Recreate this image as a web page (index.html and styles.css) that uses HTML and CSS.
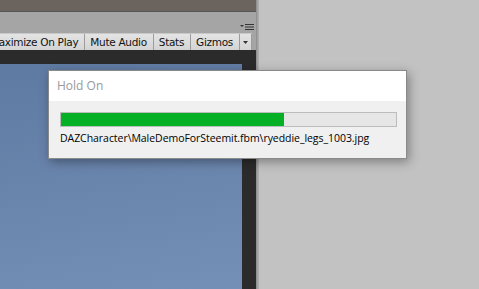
FILE: index.html
```html
<!DOCTYPE html>
<html lang="en">
<head>
    <meta charset="UTF-8">
    <meta name="viewport" content="width=device-width, initial-scale=1.0">
    <title>Hold On</title>
    <link rel="stylesheet" href="styles.css">
</head>
<body>
    <div class="editor">
        <div class="left-pane">
            <div class="scene-strip"></div>
            <div class="tab-bar">
                <svg class="tab-menu" width="14" height="6" viewBox="0 0 14 6">
                    <path d="M0 1h4l-2 2z" fill="#333"/>
                    <rect x="5" y="0" width="9" height="1" fill="#333"/>
                    <rect x="5" y="2.5" width="9" height="1" fill="#333"/>
                    <rect x="5" y="5" width="9" height="1" fill="#333"/>
                </svg>
            </div>
            <div class="toolbar">
                <span class="tool-btn">Maximize On Play</span>
                <span class="tool-btn">Mute Audio</span>
                <span class="tool-btn">Stats</span>
                <span class="tool-btn">Gizmos</span>
                <span class="tool-btn drop">
                    <svg width="5" height="3" viewBox="0 0 5 3"><path d="M0 0h5l-2.5 3z" fill="#333"/></svg>
                </span>
            </div>
            <div class="game-frame">
                <div class="game-view"></div>
            </div>
        </div>
        <div class="divider"></div>
        <div class="right-pane"></div>
    </div>

    <div class="dialog">
        <div class="dialog-title">Hold On</div>
        <div class="dialog-body">
            <div class="progress">
                <div class="progress-fill" style="width: 66.5%;"></div>
            </div>
            <div class="progress-text">DAZCharacter\MaleDemoForSteemit.fbm\ryeddie_legs_1003.jpg</div>
        </div>
    </div>
</body>
</html>
```

FILE: styles.css
```css
body {
    margin: 0;
    padding: 0;
    overflow: hidden;
    font-family: "DejaVu Sans", sans-serif;
}
.editor {
    display: flex;
    height: 289px;
    width: 479px;
}
.left-pane {
    width: 256px;
    display: flex;
    flex-direction: column;
    background-color: #a5a5a5;
}
.scene-strip {
    height: 11px;
    background-color: #6b635d;
    border-bottom: 1px solid #555;
}
.tab-bar {
    height: 21px;
    display: flex;
    justify-content: flex-end;
    align-items: flex-end;
    padding-right: 2px;
}
.tab-menu {
    margin-bottom: 3px;
}
.toolbar {
    height: 16px;
    display: flex;
    justify-content: flex-end;
    margin-right: 4px;
    background: linear-gradient(#e4e4e4, #d4d4d4);
    border-top: 1px solid #c8c8c8;
    overflow: hidden;
}
.tool-btn {
    flex-shrink: 0;
    font-size: 10.5px;
    letter-spacing: -0.3px;
    line-height: 16px;
    color: #111;
    padding: 0 6px 0 5px;
    border-right: 1px solid #9c9c9c;
    white-space: nowrap;
}
.tool-btn.drop {
    padding: 0 3px;
    display: flex;
    align-items: center;
}
.game-frame {
    flex: 1;
    background-color: #2b2b2b;
    padding: 14px 14px 0 0;
}
.game-view {
    height: 100%;
    background: linear-gradient(170deg, #5f7aa2, #7590b7);
}
.divider {
    width: 3px;
    background: linear-gradient(90deg, #8c8c8c, #b4b4b4);
}
.right-pane {
    flex: 1;
    background-color: #c2c2c2;
}
.dialog {
    position: absolute;
    left: 48px;
    top: 70px;
    width: 357px;
    border: 1px solid #8a8a8a;
    box-shadow: 2px 3px 10px rgba(0, 0, 0, 0.35);
    font-family: "Open Sans", sans-serif;
}
.dialog-title {
    height: 30px;
    background-color: #fff;
    color: #999;
    font-size: 12px;
    line-height: 30px;
    padding-left: 8px;
}
.dialog-body {
    background-color: #f0f0f0;
    padding: 11px 9px 12px 11px;
}
.progress {
    height: 13px;
    background-color: #e6e6e6;
    border: 1px solid #bcbcbc;
}
.progress-fill {
    height: 100%;
    background-color: #06b025;
}
.progress-text {
    font-size: 10.5px;
    letter-spacing: -0.05px;
    color: #000;
    margin-top: 3px;
    line-height: 16px;
}
```
